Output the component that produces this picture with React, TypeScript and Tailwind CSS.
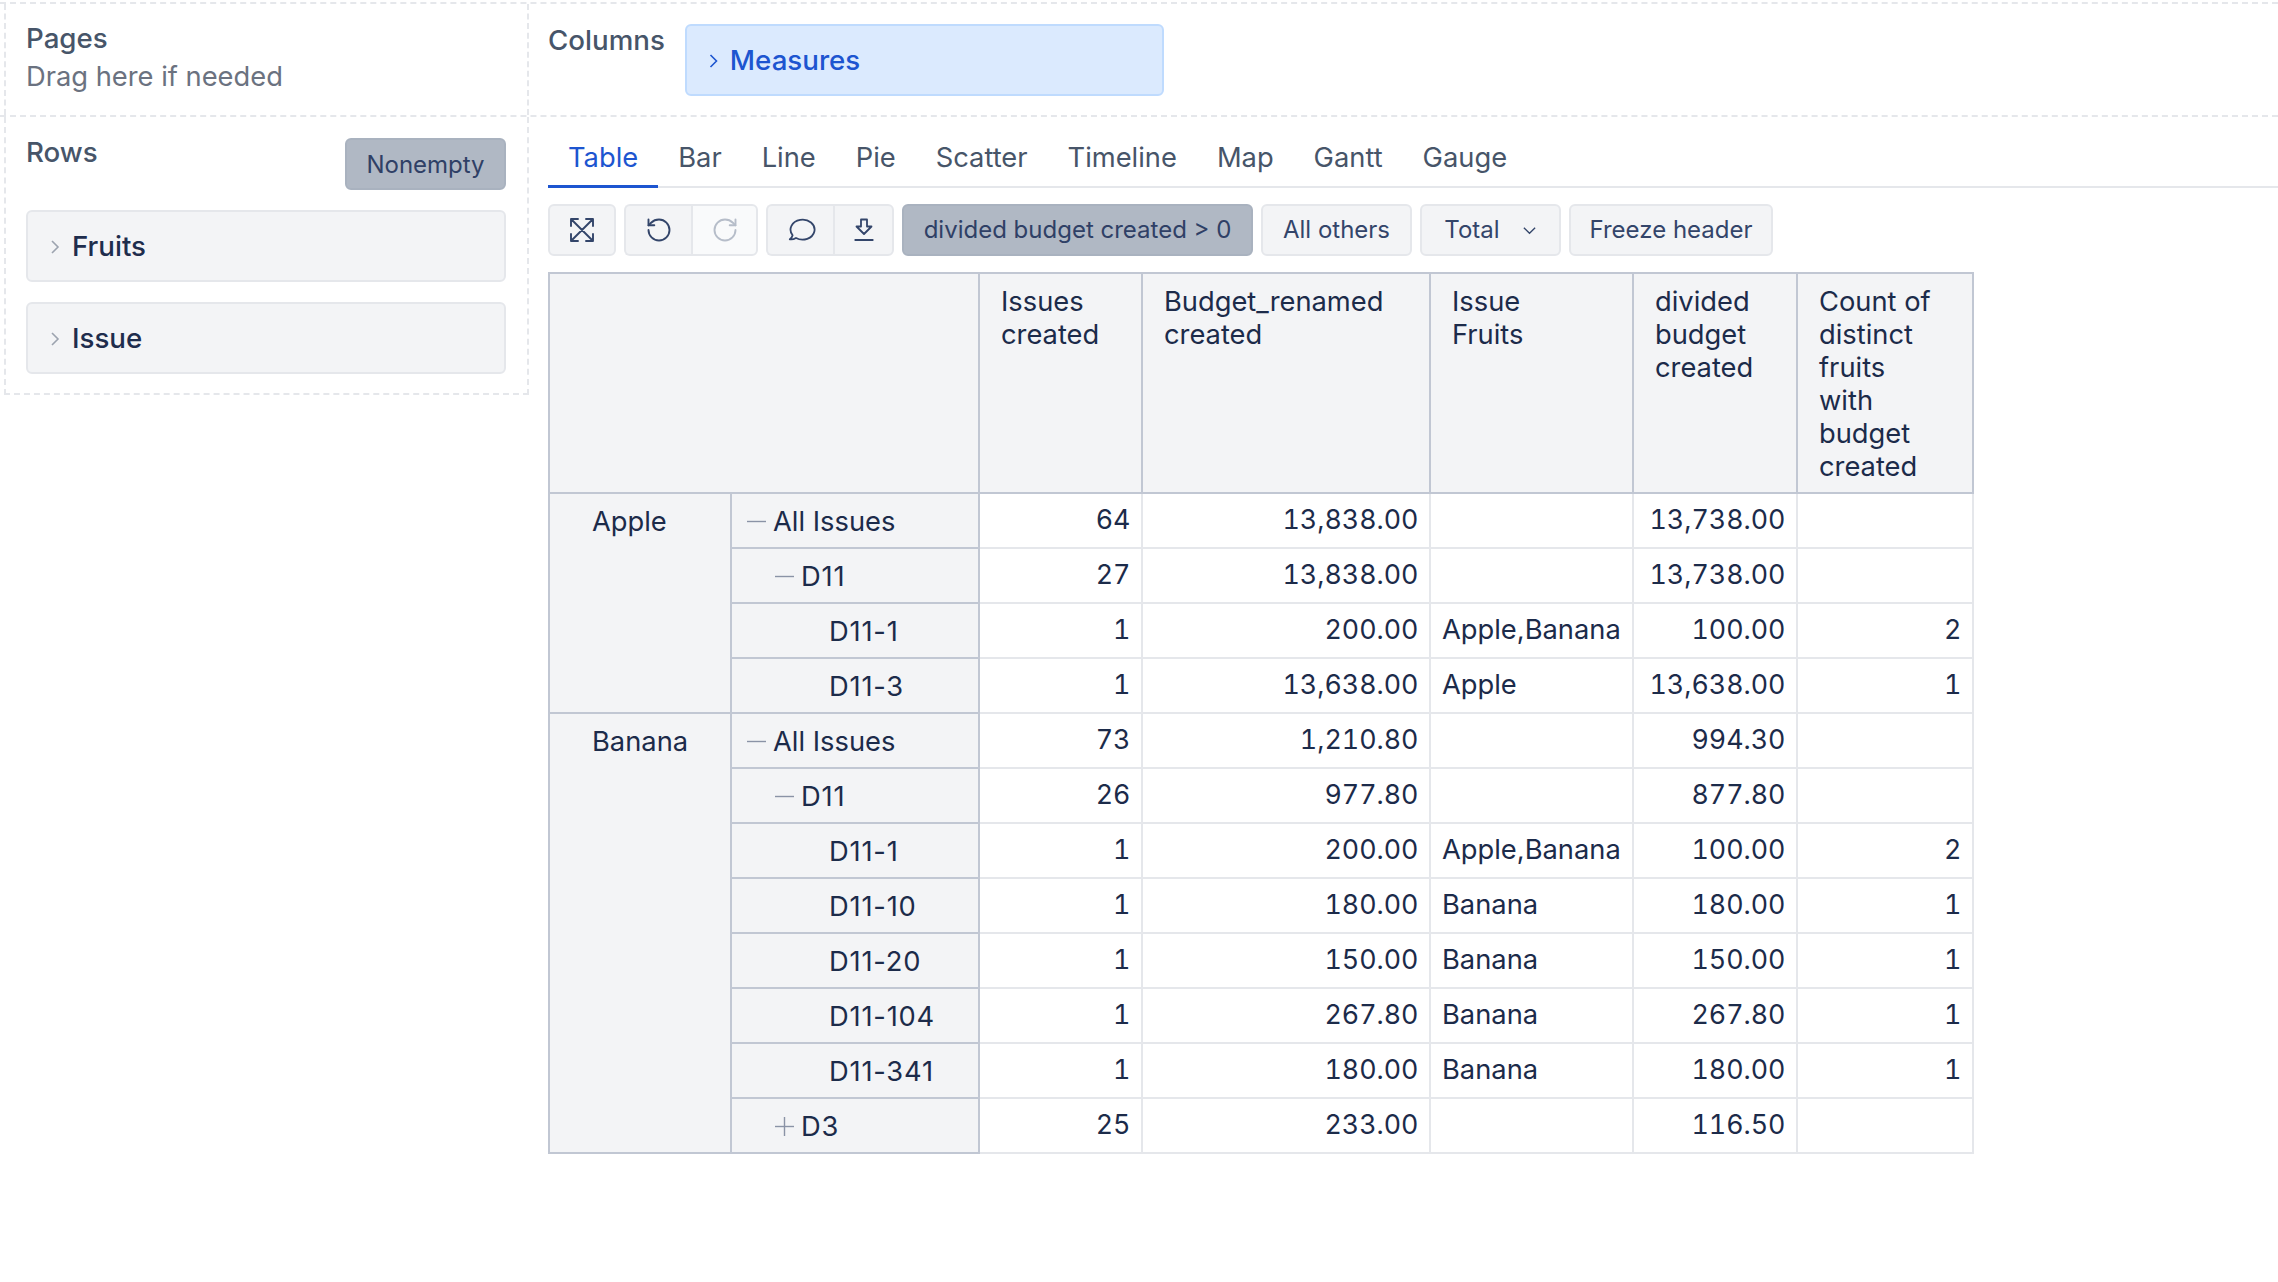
import React from "react";

const tabs = ["Table", "Bar", "Line", "Pie", "Scatter", "Timeline", "Map", "Gantt", "Gauge"];

function Chevron({ className }: { className: string }) {
  return (
    <svg viewBox="0 0 12 20" className={className} fill="none" stroke="currentColor" strokeWidth="1.6">
      <path d="M3 4l6 6-6 6" />
    </svg>
  );
}

const I = ({ children, w = 1.9 }: { children: React.ReactNode; w?: number }) => (
  <svg viewBox="0 0 30 30" className="w-[30px] h-[30px]" fill="none" stroke="currentColor" strokeWidth={w} strokeLinecap="round" strokeLinejoin="round">
    {children}
  </svg>
);

const sideBorder = "border-[#e5e7eb] border-dashed";

type Row = { head?: [string, number]; ind: number; sign?: string; name: string; a: string; b: string; c: string; d: string; e: string };

const rows: Row[] = [
  { head: ["Apple", 4], ind: 0, sign: "-", name: "All Issues", a: "64", b: "13,838.00", c: "", d: "13,738.00", e: "" },
  { ind: 1, sign: "-", name: "D11", a: "27", b: "13,838.00", c: "", d: "13,738.00", e: "" },
  { ind: 2, name: "D11-1", a: "1", b: "200.00", c: "Apple,Banana", d: "100.00", e: "2" },
  { ind: 2, name: "D11-3", a: "1", b: "13,638.00", c: "Apple", d: "13,638.00", e: "1" },
  { head: ["Banana", 8], ind: 0, sign: "-", name: "All Issues", a: "73", b: "1,210.80", c: "", d: "994.30", e: "" },
  { ind: 1, sign: "-", name: "D11", a: "26", b: "977.80", c: "", d: "877.80", e: "" },
  { ind: 2, name: "D11-1", a: "1", b: "200.00", c: "Apple,Banana", d: "100.00", e: "2" },
  { ind: 2, name: "D11-10", a: "1", b: "180.00", c: "Banana", d: "180.00", e: "1" },
  { ind: 2, name: "D11-20", a: "1", b: "150.00", c: "Banana", d: "150.00", e: "1" },
  { ind: 2, name: "D11-104", a: "1", b: "267.80", c: "Banana", d: "267.80", e: "1" },
  { ind: 2, name: "D11-341", a: "1", b: "180.00", c: "Banana", d: "180.00", e: "1" },
  { ind: 1, sign: "+", name: "D3", a: "25", b: "233.00", c: "", d: "116.50", e: "" },
];

const indentClass = ["pl-[15px]", "pl-[43px]", "pl-[97px]"];
const th = "border-2 border-[#c1c7d3] bg-[#f3f4f6] align-top font-normal text-left pl-[21px] pr-[8px] pt-[11px] pb-0 leading-[33px]";
const num = "border-2 border-[#e5e7eb] text-right pr-[10.5px] align-top pt-[9px] leading-[33px] tabular-nums text-[26.8px]";
const txt = "border-2 border-[#e5e7eb] text-left pl-[11px] align-top pt-[9px] leading-[33px]";
const btn = "h-[52px] flex items-center justify-center border-2 rounded-[6px]";
const grey = " bg-[#f3f4f6] border-[#e5e7eb] text-[#33456a]";

export default function App() {
  return (
    <div className="font-[family-name:Inter,sans-serif] w-[2278px] h-[1282px] bg-white text-[#1c2b4a] text-[27.3px] overflow-hidden pt-[2px]">
      <div className={"flex h-[115px] border-t-2 border-b-2 " + sideBorder}>
        <div className={"w-[525px] ml-[4px] border-l-2 border-r-2 pl-[20px] pt-[16px] leading-[37px] shrink-0 " + sideBorder}>
          <div className="font-medium text-[#475569] text-[27.7px]">Pages</div>
          <div className="text-[#6b7280] pt-[1px]">Drag here if needed</div>
        </div>
        <div className="flex items-start pl-[19px] pt-[20px] gap-[20px]">
          <div className="font-medium text-[#475569] text-[27.7px] leading-[36px] -mt-[2px]">Columns</div>
          <div className="w-[479px] h-[72px] bg-[#dbeafe] border-2 border-[#bfdbfe] rounded-[6px] flex items-center pl-[20px] gap-[10px] text-[#1d55d0] font-medium text-[27.7px] pt-[1px]">
            <Chevron className="w-[13px] h-[20px] shrink-0" />
            Measures
          </div>
        </div>
      </div>
      <div className="flex items-start">
        <div className={"w-[525px] ml-[4px] h-[278px] border-l-2 border-r-2 border-b-2 pl-[20px] pr-[21px] shrink-0 " + sideBorder}>
          <div className="flex justify-between pt-[21px] items-start">
            <div className="font-medium text-[#475569] text-[27.7px] leading-[34px] -mt-[3px]">Rows</div>
            <div className="w-[161px] h-[52px] rounded-[6px] bg-[#b0b8c4] border-2 border-[#a9b2bf] flex items-center justify-center text-[#2f4066] text-[24px] pt-[1px]">Nonempty</div>
          </div>
          {["Fruits", "Issue"].map((n) => (
            <div key={n} className="mt-[20px] h-[72px] bg-[#f3f4f6] border-2 border-[#e5e7eb] rounded-[6px] flex items-center pl-[21px] gap-[11px] font-medium text-[27.7px] text-[#1e2d4d] pt-[1px]">
              <Chevron className="w-[12px] h-[20px] text-[#9ca3af] shrink-0" />
              {n}
            </div>
          ))}
        </div>
        <div className="flex-1 pl-[19px] pt-[18px]">
          <div className="flex border-b-2 border-[#e5e7eb] h-[53px] text-[27.3px] text-[#475569]">
            {tabs.map((t, i) => (
              <div key={t} className={"px-[20px] leading-[46px] h-[53px] " + (i === 0 ? "border-b-[3px] border-[#1d55d0] text-[#1d55d0]" : "")}>{t}</div>
            ))}
          </div>
          <div className="flex gap-[8px] mt-[16px] text-[24px]">
            <button className={btn + grey + " w-[68px]"}>
              <I><path d="M4 4l22 22M26 4L4 26M4 11V4h7M19 4h7v7M26 19v7h-7M11 26H4v-7" /></I>
            </button>
            <div className="flex">
              <button className={btn + grey + " w-[67px] rounded-r-none border-r-0"}>
                <I><path d="M4.500 15a10.500 10.500 0 1 0 10.500-10.500 11.400 11.400 0 0 0-7.900 3.200L4.500 10.300" /><path d="M4.500 4.500v5.800h5.800" /></I>
              </button>
              <button className={btn + " bg-[#f9fafb] border-[#e5e7eb] w-[67px] rounded-l-none text-[#b6bdc9]"}>
                <I><path d="M25.500 15a10.500 10.500 0 1 1-10.500-10.500 11.400 11.400 0 0 1 7.900 3.200l2.600 2.600" /><path d="M25.500 4.500v5.800h-5.800" /></I>
              </button>
            </div>
            <div className="flex">
              <button className={btn + grey + " w-[67px] rounded-r-none border-r-0"}>
                <I w={1.8}><path d="M6.600 20.200A12 10 0 1 1 10 23Q7 24.800 3.800 24.300 6 22.800 6.600 20.200Z" /></I>
              </button>
              <button className={btn + grey + " w-[61px] rounded-l-none"}>
                <I w={1.8}><path d="M12 4.500h6v7h4.500L15 19 7.500 11.500H12zM6.250 25h17.500" /></I>
              </button>
            </div>
            <button className={btn + " w-[351px] bg-[#b0b8c4] border-[#a9b2bf] text-[#2f4066]"}>divided budget created &gt; 0</button>
            <button className={btn + grey + " w-[151px]"}>All others</button>
            <button className={btn + grey + " w-[141px] gap-[22px]"}>
              Total
              <svg viewBox="0 0 16 16" className="w-[15px] h-[15px]" fill="none" stroke="currentColor" strokeWidth="1.4"><path d="M2 5l6 6 6-6" /></svg>
            </button>
            <button className={btn + grey + " w-[204px]"}>Freeze header</button>
          </div>
          <table className="mt-[16px] border-collapse table-fixed w-[1424px] border-2 border-[#c1c7d3] text-[#1c2b4a]">
            <colgroup>
              <col className="w-[182px]" />
              <col className="w-[248px]" />
              <col className="w-[163px]" />
              <col className="w-[288px]" />
              <col className="w-[203px]" />
              <col className="w-[164px]" />
              <col className="w-[176px]" />
            </colgroup>
            <thead>
              <tr className="h-[220px]">
                <th colSpan={2} className={th}></th>
                <th className={th}>Issues created</th>
                <th className={th}>Budget_renamed created</th>
                <th className={th}>Issue<br />Fruits</th>
                <th className={th}>divided budget created</th>
                <th className={th}>Count of<br />distinct<br />fruits<br />with<br />budget<br />created</th>
              </tr>
            </thead>
            <tbody>
              {rows.map((r, i) => (
                <tr key={i} className="h-[55px]">
                  {r.head && (
                    <td rowSpan={r.head[1]} className="border-2 border-[#c1c7d3] bg-[#f3f4f6] align-top pl-[42px] pt-[11px] leading-[33px]">{r.head[0]}</td>
                  )}
                  <td className={"border-2 border-[#c1c7d3] bg-[#f3f4f6] align-top pt-[11px] leading-[33px] " + indentClass[r.ind]}>
                    <span className={"flex items-center gap-[7px] " + (r.ind > 0 ? "tracking-[0.8px]" : "")}>
                      {r.sign && (
                        <svg viewBox="0 0 19 19" className="w-[19px] h-[19px] text-[#8a93a6] shrink-0" fill="none" stroke="currentColor" strokeWidth="1.4">
                          <path d="M0 9.500h19" />
                          {r.sign === "+" && <path d="M9.500 0v19" />}
                        </svg>
                      )}
                      {r.name}
                    </span>
                  </td>
                  <td className={num}>{r.a}</td>
                  <td className={num}>{r.b}</td>
                  <td className={txt}>{r.c}</td>
                  <td className={num}>{r.d}</td>
                  <td className={num}>{r.e}</td>
                </tr>
              ))}
            </tbody>
          </table>
        </div>
      </div>
    </div>
  );
}
